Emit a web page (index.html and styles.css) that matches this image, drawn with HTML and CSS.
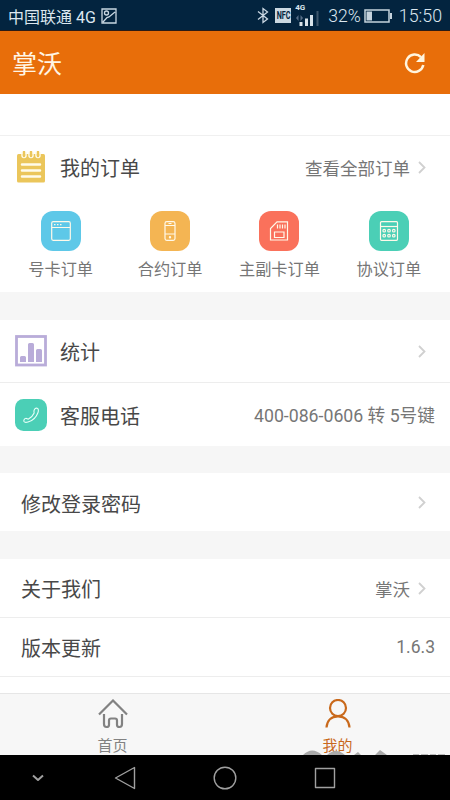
FILE: index.html
```html
<!DOCTYPE html>
<html lang="zh-CN">
<head>
<meta charset="utf-8">
<title>掌沃</title>
<link rel="stylesheet" href="styles.css">
</head>
<body>
<div class="status">
  <span class="carrier">中国联通 4G</span>
  <svg class="pic" width="16" height="16" viewBox="0 0 16 16"><path d="M1 1h14v14H1zM2 14 6 9.500 8 9 14 4"/><circle cx="5.500" cy="5" r="2"/></svg>
  <svg class="bt" width="12" height="17" viewBox="0 0 12 17"><path d="M1 4.500 10.500 12 6 15.500v-14L10.500 5 1 12.500"/></svg>
  <span class="nfc"><span>NFC</span></span>
  <div class="signal"><span class="gen">4G</span><svg width="26" height="22" viewBox="0 0 26 22"><path d="M7 18v4M12.500 14.500V22M17.500 11v11" stroke="#d9e3ea" stroke-width="3"/><path d="M23.500 7v15" stroke="#3e566c" stroke-width="2"/><path d="m2 14 2.500-3v6zM9 14l-2.500-3v6z" fill="#58708a"/></svg></div>
  <span class="pct">32%</span>
  <svg class="battery" width="28" height="14" viewBox="0 0 28 14"><path d="M1 1h24v12H1z" fill="none" stroke="#c6d3dd" stroke-width="1.500"/><path d="M2.500 2.500H8v9H2.500zM26 4h2v6h-2z" fill="#c6d3dd"/></svg>
  <span class="time">15:50</span>
</div>
<header class="header">
  <h1>掌沃</h1>
  <svg width="22" height="22" viewBox="0 0 22 22"><path d="M17 5.200A8.700 8.700 0 1 0 19.300 13" fill="none" stroke="#fff5df" stroke-width="2.500"/><path d="M20.500 1v9H12z" fill="#fff5df"/></svg>
</header>
<main class="content">
  <div class="top-space"></div>
  <section class="orders">
    <div class="orders-head">
      <svg class="lead" width="32" height="32" viewBox="0 0 32 32"><rect x="2" y="3" width="28" height="28.500" rx="1.500" fill="#ebc65b"/><path d="M7 1v3.500a2 2 0 0 0 4 0V1M14 1v3.500a2 2 0 0 0 4 0V1M21 1v3.500a2 2 0 0 0 4 0V1" fill="none" stroke="#fffbea" stroke-width="1.500"/><path d="M9 .8v4.200M16 .8v4.200M23 .8v4.200" stroke="#ebc65b" stroke-width="2.400" stroke-linecap="round"/><path d="M7 13.500h18M7 19.500h18M7 25.500h18" stroke="#fffbea" stroke-width="2.500" stroke-linecap="round"/></svg>
      <span class="title">我的订单</span><span class="value">查看全部订单</span>
      <svg class="chev" width="8" height="13" viewBox="0 0 8 13"><path d="m1 1 5.500 5.500L1 12"/></svg>
    </div>
    <div class="grid">
      <div class="item"><div class="tile blue"><svg width="20" height="20" viewBox="0 0 20 20"><rect x=".7" y=".7" width="18.600" height="18.600" rx="1.500"/><path d="M1 6.500h18M3 3.700h1.500M6 3.700h1.500M9 3.700h1.500"/></svg></div><span>号卡订单</span></div>
      <div class="item"><div class="tile orange"><svg width="20" height="20" viewBox="0 0 20 20"><rect x="5" y=".7" width="10" height="18.600" rx="1.800"/><path d="M5 4.500h10M5 13h10M8.500 2.500h3"/><circle cx="10" cy="16.200" r=".6"/></svg></div><span>合约订单</span></div>
      <div class="item"><div class="tile red"><svg width="20" height="20" viewBox="0 0 20 20"><path d="M1.500 19V7.500L8 .8h10.500V19zM8.500 3.500v4M11 3.500v4M13.500 3.500v4M16 3.500v4M5.500 11h9.500v5.500H5.500z"/></svg></div><span>主副卡订单</span></div>
      <div class="item"><div class="tile teal"><svg width="20" height="20" viewBox="0 0 20 20"><rect x="1.500" y=".7" width="17" height="18.600" rx="1"/><path d="M1.500 5.500h17"/><g><circle cx="5.200" cy="9.700" r="1.300"/><circle cx="10" cy="9.700" r="1.300"/><circle cx="14.800" cy="9.700" r="1.300"/><circle cx="5.200" cy="14.700" r="1.300"/><circle cx="10" cy="14.700" r="1.300"/><circle cx="14.800" cy="14.700" r="1.300"/></g></svg></div><span>协议订单</span></div>
    </div>
  </section>
  <section class="group stats">
    <div class="row tall">
      <svg class="lead" width="32" height="32" viewBox="0 0 32 32"><rect x="1.500" y="1.500" width="29" height="28.500" fill="none" stroke="#b9acd9" stroke-width="2.800"/><path d="M5 22.500q0-1.500 1.500-1.500h3q1.500 0 1.500 1.500V27H5zM13 9.500q0-1.500 1.500-1.500h3q1.500 0 1.500 1.500V27h-6zM21 15.500q0-1.500 1.500-1.500h3q1.500 0 1.500 1.500V27h-6z" fill="#b9acd9"/></svg>
      <span class="title">统计</span>
      <svg class="chev" width="8" height="13" viewBox="0 0 8 13"><path d="m1 1 5.500 5.500L1 12"/></svg>
    </div>
    <div class="row tall">
      <svg class="lead" width="32" height="32" viewBox="0 0 32 32"><rect width="32" height="32" rx="8.500" fill="#4bcfb6"/><path d="M9 22.500c-.6-1 .3-2.700 1.500-3 1.500-.5 2 1 3 .5 2.500-1.200 4.500-3.500 5.500-5.700.5-1.100-.6-1.600.2-3.300.6-1.300 2-2 3-1.700 1.500.5 1.400 2.600.7 4.400-1.600 4.400-5.700 8.100-9.900 9.300-1.600.5-3.300.6-4-.5z" fill="none" stroke="#e9fff9" stroke-width="1.100"/></svg>
      <span class="title low">客服电话</span><span class="value end phone">400-086-0606 转 5号键</span>
    </div>
  </section>
  <section class="group">
    <div class="row">
      <span class="title low">修改登录密码</span>
      <svg class="chev" width="8" height="13" viewBox="0 0 8 13"><path d="m1 1 5.500 5.500L1 12"/></svg>
    </div>
  </section>
  <section class="group about">
    <div class="row"><span class="title">关于我们</span><span class="value">掌沃</span>
      <svg class="chev" width="8" height="13" viewBox="0 0 8 13"><path d="m1 1 5.500 5.500L1 12"/></svg>
    </div>
    <div class="row"><span class="title">版本更新</span><span class="value end">1.6.3</span></div>
    <div class="remainder"></div>
  </section>
</main>
<nav class="tabs">
  <div class="tab"><svg width="32" height="30" viewBox="0 0 32 30"><path d="M2 15.500 16 1.500l14 14M7 15v10q0 3 2.500 3t2.500-2v-4.500q0-2 2-2h4q2 0 2 2V26q0 2 2.500 2t2.500-3V15"/></svg><span>首页</span></div>
  <div class="tab active"><svg width="32" height="30" viewBox="0 0 32 30"><circle cx="16" cy="9" r="8"/><path d="M4.500 28.500C5 21.500 9.500 17.300 16 17.300S27 21.500 27.500 28.500"/></svg><span>我的</span></div>
  <svg class="mark" width="150" height="5" viewBox="0 0 150 5"><path d="M3 5q9-9 19 0zM27 5q9-8 18 0zM54 5l4-3 3 3zM75 5l5-5 7 5z"/><path d="M113 4.500h6M121 4.500h7M130 4.500h6M138 4.500h7" fill="none" stroke="#bbb" stroke-width="1"/></svg>
</nav>
<div class="system">
  <svg width="12" height="8" viewBox="0 0 12 8"><path d="m1 1.500 5 4.500 5-4.500" stroke-width="2"/></svg>
  <svg width="22" height="24" viewBox="0 0 22 24"><path d="M1.500 12 20.500 1.500v21z"/></svg>
  <svg width="24" height="24" viewBox="0 0 24 24"><circle cx="12" cy="12" r="10.800"/></svg>
  <svg width="22" height="22" viewBox="0 0 22 22"><rect x="1.500" y="1.500" width="19" height="19"/></svg>
</div>
</body>
</html>
```
FILE: styles.css
```css
* { box-sizing: border-box; }
body { margin: 0; width: 450px; height: 800px; overflow: hidden; display: flex; flex-direction: column; background: #f6f6f6; font-family: Roboto, "Noto Sans CJK SC", sans-serif; }
svg { display: block; flex: none; }
.status { height: 31px; flex: none; background: #03243f; color: #dce7ef; display: flex; align-items: center; padding: 1px 8px 0; font-size: 16px; white-space: nowrap; border-bottom: 1px solid #2b1b16; }
.pic { margin-left: 5px; }
.pic, .bt { fill: none; stroke: #c9d7e2; stroke-width: 1.3; }
.bt { margin-left: auto; }
.nfc { width: 16px; height: 15px; margin-left: 6px; background: #cbd8e1; color: #03243f; font-size: 10px; font-weight: 700; line-height: 15px; display: flex; justify-content: center; }
.nfc span { flex: none; transform: scaleX(.72); }
.signal { position: relative; width: 26px; height: 22px; margin-left: 3px; }
.signal svg { position: absolute; top: -1px; left: 0; }
.gen { position: absolute; left: 1px; top: -1px; font-size: 8px; font-weight: 700; line-height: 8px; }
.pct { margin-left: 8px; font-size: 17.6px; font-weight: 300; }
.battery { margin-left: 3px; }
.time { margin-left: 7px; font-size: 17.8px; font-weight: 300; }
.header { height: 63px; flex: none; background: #e86e0a; display: flex; align-items: center; justify-content: space-between; padding: 0 24px 0 12px; }
.header h1 { margin: 0; padding-bottom: 2px; color: #fff5e4; font-size: 25px; font-weight: 400; }
.content { flex: 1; min-height: 0; overflow: hidden; }
.top-space { height: 42px; background: #fff; border-bottom: 1px solid #f0f0f0; }
.orders { height: 156px; background: #fff; }
.orders-head { height: 64px; display: flex; align-items: center; padding: 0 24px 2px 15px; }
.title { margin-right: auto; font-size: 20px; color: #484848; }
.low { padding-top: 2px; }
.lead { margin-right: 13px; }
.value { font-size: 17.5px; color: #767676; }
.phone { font-size: 17.7px; padding-bottom: 1px; }
.chev { fill: none; stroke: #d0d0d0; stroke-width: 1.8; margin-left: 8px; }
.grid { display: grid; grid-template-columns: repeat(4, 109.4px); padding: 11px 0 0 6px; }
.item { display: flex; flex-direction: column; align-items: center; font-size: 16.2px; line-height: 24px; color: #767676; }
.tile { width: 40px; height: 40px; border-radius: 12px; display: grid; place-items: center; margin-bottom: 7px; }
.tile svg { fill: none; stroke: #fff9e9; stroke-width: 1.2; }
.blue { background: #5ec8e8; } .orange { background: #f4b553; } .red { background: #fa715b; } .teal { background: #4bcfb6; }
.group { margin-top: 27px; background: #fff; }
.stats { margin-top: 28px; }
.row { height: 58px; display: flex; align-items: center; padding: 0 24px 0 21px; }
.row + .row { border-top: 1px solid #ededed; height: 59px; }
.tall { height: 62px; padding-left: 15px; }
.row.tall + .row.tall { height: 64px; }
.end { margin-right: -9px; }
.about { margin-top: 28px; }
.remainder { height: 17px; border-top: 1px solid #ededed; }
.tabs { position: relative; flex: none; height: 62px; display: flex; background: #f7f7f7; border-top: 1px solid #e6e6e6; }
.tab { flex: 1; display: flex; flex-direction: column; align-items: center; padding-top: 5px; color: #828282; font-size: 15px; line-height: 22px; }
.tab svg { fill: none; stroke: currentColor; stroke-width: 2.2; margin-bottom: 6px; }
.active { color: #c9691b; }
.mark { position: absolute; right: 0; bottom: 0; fill: #aaa; }
.system { height: 45px; flex: none; background: #000; display: grid; grid-template-columns: 75px 100px 100px 100px; place-items: center; }
.system svg { fill: none; stroke: #a0a0a0; stroke-width: 1.4; stroke-linejoin: round; }
```
